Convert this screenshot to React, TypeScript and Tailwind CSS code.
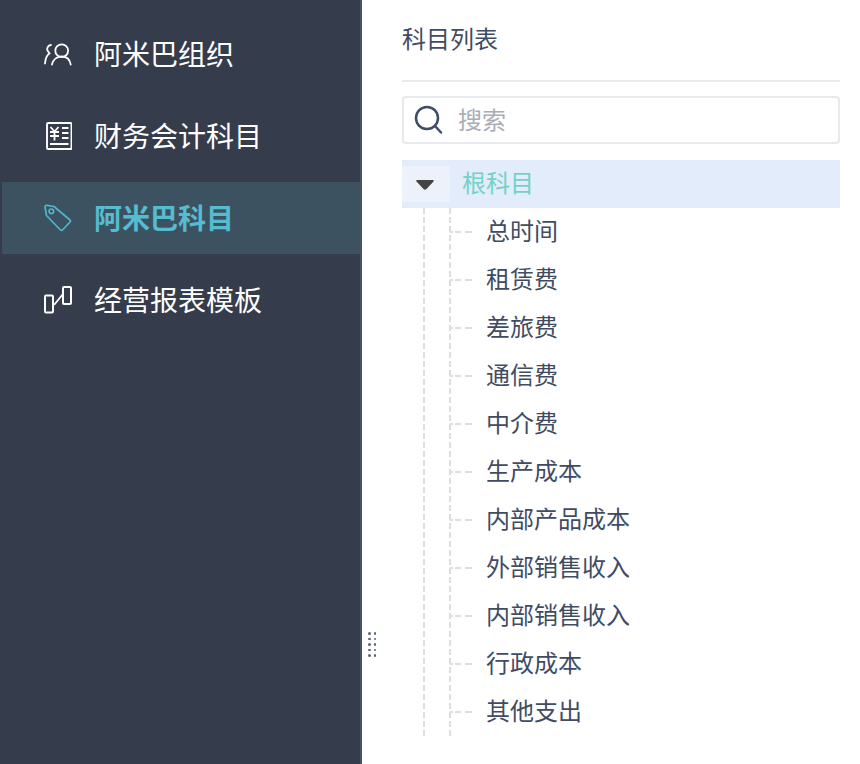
import React from "react";

const cjk = { fontFamily: '"Noto Sans CJK SC", "Noto Sans", sans-serif' };

function Users() {
  return (
    <svg width="30" height="26" viewBox="0 0 30 26" fill="none" stroke="#fff" strokeWidth="1.800" strokeLinecap="round">
      <circle cx="19.700" cy="9.700" r="6.400" />
      <path d="M10 23.500c1-5 5-8 9.700-8s8.200 3 9 8" />
      <path d="M9 4C6 4.500 4.500 7 5.500 9.500L7.500 12.500C5 14 3.500 17 3 22.500" />
    </svg>
  );
}
function Ledger() {
  return (
    <svg width="30" height="28" viewBox="0 0 30 28" fill="none" stroke="#fff" strokeWidth="1.900">
      <rect x="5" y="1" width="24.500" height="26" rx="1" />
      <path d="M8 22h18.500M20 6h6.500M20 11h6.500M20 16h6.500" />
      <path d="M8.500 5l4 4.500 4-4.500M8 10h9M8 14h9M12.500 9.500V18.500" strokeWidth="1.800" />
    </svg>
  );
}
function Tag() {
  return (
    <svg width="30" height="30" viewBox="0 0 30 30" fill="none" stroke="#4fb6cb" strokeWidth="1.700" strokeLinejoin="round">
      <path d="M3 4q0-2 2-1.700L12 3.500 28 17q1 1 0 2L20.500 27q-1 1-2 0L4.500 12.500z" />
      <circle cx="9.300" cy="8.300" r="2.300" />
    </svg>
  );
}
function Trend() {
  return (
    <svg width="30" height="30" viewBox="0 0 30 30" fill="none" stroke="#fff" strokeWidth="2">
      <rect x="3" y="10.500" width="8" height="17" rx="1" />
      <rect x="21" y="2" width="8" height="17" rx="1" />
      <path d="M12 20 21 9" strokeWidth="1.800" />
    </svg>
  );
}

const nav = [
  { label: "阿米巴组织", icon: <Users /> },
  { label: "财务会计科目", icon: <Ledger /> },
  { label: "阿米巴科目", icon: <Tag /> },
  { label: "经营报表模板", icon: <Trend /> },
];

const rows = ["总时间", "租赁费", "差旅费", "通信费", "中介费", "生产成本", "内部产品成本", "外部销售收入", "内部销售收入", "行政成本", "其他支出"];

function Grip() {
  return (
    <div className="absolute left-[368px] top-[632px] grid grid-cols-2 gap-x-[3px] gap-y-[3px]">
      {Array.from({ length: 10 }).map((_, i) => (
        <span key={i} className="w-[2.500px] h-[2.500px] rounded-full bg-[#5b6472]" />
      ))}
    </div>
  );
}

const vLine = "w-[2px] h-[528px] shrink-0 bg-[repeating-linear-gradient(to_bottom,#dcdee3_0,#dcdee3_6px,transparent_6px,transparent_9px)]";

export default function App() {
  return (
    <div className="relative w-[860px] h-[764px] flex bg-white overflow-hidden" style={cjk}>
      <aside className="w-[362px] h-full shrink-0 bg-[#353c4c] border-r-2 border-[#4a5160] pt-[18px] pl-[2px]">
        <div className="flex items-center w-[358px] h-[72px] pl-[40px] text-white text-[28px]">
          <span className="w-[52px] flex items-center">{nav[0].icon}</span>
          <span className="pb-[3px]">{nav[0].label}</span>
        </div>
        <div className="flex items-center w-[358px] h-[92px] pl-[40px] text-white text-[28px]">
          <span className="w-[52px] flex items-center">{nav[1].icon}</span>
          <span className="pb-[3px]">{nav[1].label}</span>
        </div>
        <div className="flex items-center w-[358px] h-[72px] pl-[40px] bg-[#3d5261] text-[#56bccf] font-bold text-[28px]">
          <span className="w-[52px] flex items-center">{nav[2].icon}</span>
          <span className="pb-[3px]">{nav[2].label}</span>
        </div>
        <div className="flex items-center w-[358px] h-[92px] pl-[40px] text-white text-[28px]">
          <span className="w-[52px] flex items-center">{nav[3].icon}</span>
          <span className="pb-[3px]">{nav[3].label}</span>
        </div>
      </aside>
      <Grip />
      <main className="flex-1 pl-[40px] pr-[20px]">
        <div className="h-[82px] border-b-2 border-[#e8e9ec] text-[24px] text-[#414c63] pt-[20px] leading-[36px]">科目列表</div>
        <div className="mt-[14px] h-[48px] border-2 border-[#e8e9ec] rounded-[4px] flex items-center pl-[10px]">
          <svg width="30" height="30" viewBox="0 0 30 30" fill="none" stroke="#3f4c66" strokeWidth="2.500" strokeLinecap="round">
            <circle cx="13" cy="13" r="11" />
            <path d="M21 21l6 6.500" />
          </svg>
          <span className="ml-[14px] pb-[2px] text-[24px] text-[#a9adb5]">搜索</span>
        </div>
        <div className="mt-[16px] h-[48px] bg-[#e2ecfa] flex items-center">
          <div className="w-[48px] h-[36px] bg-[#edf1f9] flex items-center justify-center">
            <svg width="20" height="12" viewBox="0 0 20 12" className="mt-[2px] -ml-[2px]">
              <path d="M2 1h16q1.500 0 .5 1.500l-7 7.500q-1.500 1.500-3 0l-7-7.500Q.5 1 2 1z" fill="#444" />
            </svg>
          </div>
          <span className="ml-[12px] pb-[4px] text-[24px] text-[#72d2c8]">根科目</span>
        </div>
        <div className="flex">
          <div className="w-[47px] shrink-0 pl-[21px]">
            <div className={vLine} />
          </div>
          <div className={vLine} />
          <div className="flex-1">
            {rows.map((r) => (
              <div key={r} className="h-[48px] flex items-center">
                <div className="w-[22px] h-[2px] ml-[-1px] bg-[repeating-linear-gradient(to_right,#dcdee3_0,#dcdee3_3px,transparent_3px,transparent_5px,#dcdee3_5px,#dcdee3_11px,transparent_11px,transparent_15px,#dcdee3_15px,#dcdee3_21px,transparent_21px)]" />
                <span className="ml-[14px] pb-[4px] text-[24px] text-[#414c63] leading-none">{r}</span>
              </div>
            ))}
          </div>
        </div>
      </main>
    </div>
  );
}
